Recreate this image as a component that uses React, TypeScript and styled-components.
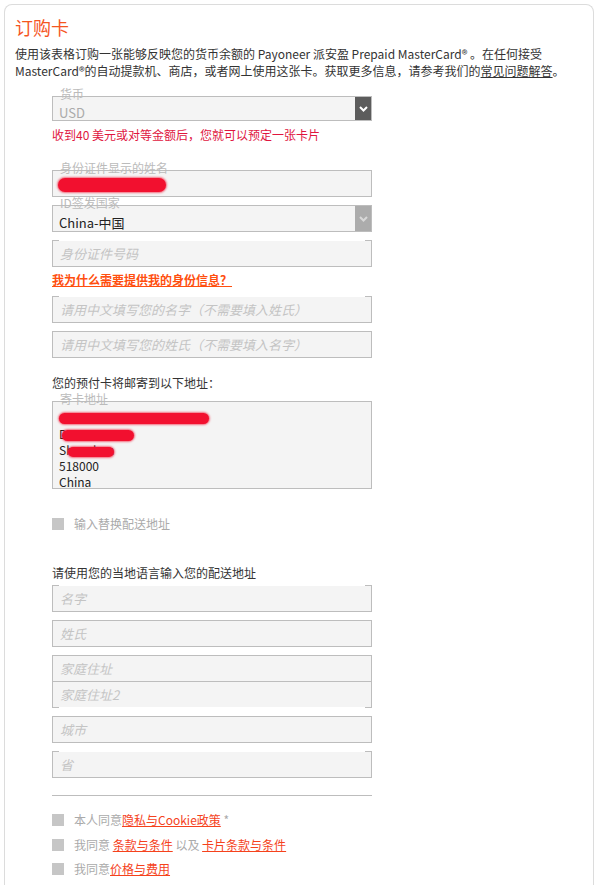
import React from 'react';
import styled, { createGlobalStyle, css } from 'styled-components';

const GlobalStyle = createGlobalStyle`
  html, body {
    margin: 0;
    padding: 0;
    background: #fff;
  }
  body {
    font-family: "Noto Sans CJK SC", "Open Sans", sans-serif;
    font-size: 12px;
    color: #333;
  }
`;

const Card = styled.div`
  margin: 4px 5px 0 4px;
  border: 1px solid #dcdcdc;
  border-bottom: none;
  border-radius: 8px 8px 0 0;
  padding: 10px 10px 0 10px;
  min-height: 881px;
  box-sizing: border-box;
`;

const Title = styled.h1`
  margin: 0;
  font-size: 18px;
  line-height: 24px;
  font-weight: normal;
  color: #f5561f;
`;

const Intro = styled.p`
  margin: 6px 0 0;
  font-size: 12px;
  line-height: 17px;
  color: #333;
  white-space: nowrap;
`;

const FaqLink = styled.a`
  color: #333;
  text-decoration: underline;
`;

const Form = styled.div`
  margin-left: 37px;
  width: 320px;
  display: flex;
  flex-direction: column;
`;

const Field = styled.div<{ $mt: number; $h?: number; $gapTop?: boolean; $gapBottom?: boolean }>`
  position: relative;
  margin-top: ${({ $mt }) => $mt}px;
  height: ${({ $h }) => $h ?? 27}px;
  box-sizing: border-box;
  border: 1px solid #bdbdbd;
  background: #f4f4f4;
  display: flex;
  align-items: center;
  ${({ $gapTop }) =>
    $gapTop &&
    css`
      &::before {
        content: '';
        position: absolute;
        top: -1px;
        left: 6px;
        right: 6px;
        height: 1px;
        background: #fff;
      }
    `}
  ${({ $gapBottom }) =>
    $gapBottom &&
    css`
      &::after {
        content: '';
        position: absolute;
        bottom: -1px;
        left: 6px;
        right: 6px;
        height: 1px;
        background: #fff;
      }
    `}
`;

const Legend = styled.span`
  position: absolute;
  top: -9px;
  left: 4px;
  padding: 0 3px;
  font-size: 12px;
  line-height: 12px;
  color: #bbb;
  background: linear-gradient(#fff 70%, transparent 70%);
`;

const Value = styled.span<{ $muted?: boolean }>`
  padding-left: 6px;
  padding-top: 7px;
  font-size: 13px;
  line-height: 15px;
  color: ${({ $muted }) => ($muted ? '#aaa' : '#222')};
  flex: 1;
`;

const Placeholder = styled.span`
  padding-left: 7px;
  font-size: 13px;
  font-style: italic;
  color: #c4c4c4;
`;

const Arrow = styled.div<{ $dark?: boolean }>`
  align-self: stretch;
  width: 16px;
  background: ${({ $dark }) => ($dark ? '#5c5c5c' : '#acacac')};
  display: flex;
  align-items: center;
  justify-content: center;
  color: ${({ $dark }) => ($dark ? '#fff' : '#d8d8d8')};
`;

const Note = styled.div`
  margin-top: 5px;
  font-size: 12px;
  line-height: 17px;
  color: #e0163f;
`;

const IdLink = styled.a`
  margin-top: 4px;
  align-self: flex-start;
  font-size: 12px;
  line-height: 18px;
  font-weight: bold;
  color: #ff4f0f;
  text-decoration: underline;
`;

const Heading = styled.div<{ $mt: number }>`
  margin-top: ${({ $mt }) => $mt}px;
  font-size: 12px;
  line-height: 18px;
  color: #333;
`;

const AddressBox = styled(Field)`
  display: block;
  padding: 8px 0 0 6px;
`;

const AddressLine = styled.div`
  position: relative;
  font-size: 12px;
  line-height: 16px;
  height: 16px;
  color: #222;
`;

const Redact = styled.span<{ $left: number; $top: number; $w: number; $h?: number }>`
  position: absolute;
  left: ${({ $left }) => $left}px;
  top: ${({ $top }) => $top}px;
  width: ${({ $w }) => $w}px;
  height: ${({ $h }) => $h ?? 12}px;
  border-radius: 8px;
  background: #f2102f;
  box-shadow: 0 0 2px 1px rgba(242, 16, 47, 0.6);
`;

const CheckRow = styled.label<{ $mt: number }>`
  margin-top: ${({ $mt }) => $mt}px;
  display: flex;
  align-items: center;
  gap: 10px;
  font-size: 12px;
  line-height: 16px;
  color: #aaa;
`;

const Box = styled.span`
  width: 12px;
  height: 12px;
  background: #c6c6c6;
  flex-shrink: 0;
`;

const TermsLink = styled.a`
  color: #f5421c;
  text-decoration: underline;
`;

const Divider = styled.hr`
  margin: 17px 0 0;
  border: none;
  border-top: 1px solid #bdbdbd;
  height: 0;
  width: 320px;
`;

const Chevron = () => (
  <svg width="9" height="6" viewBox="0 0 9 6" fill="none">
    <path d="M1 1l3.5 3.5L8 1" stroke="currentColor" strokeWidth="2" />
  </svg>
);

export default function App() {
  return (
    <>
      <GlobalStyle />
      <Card>
        <Title>订购卡</Title>
        <Intro>
          使用该表格订购一张能够反映您的货币余额的 Payoneer 派安盈 Prepaid MasterCard® 。在任何接受
          <br />
          MasterCard®的自动提款机、商店，或者网上使用这张卡。获取更多信息，请参考我们的
          <FaqLink>常见问题解答</FaqLink>。
        </Intro>
        <Form>
          <Field $mt={17} $h={25}>
            <Legend>货币</Legend>
            <Value $muted>USD</Value>
            <Arrow $dark>
              <Chevron />
            </Arrow>
          </Field>
          <Note>收到40 美元或对等金额后，您就可以预定一张卡片</Note>

          <Field $mt={27}>
            <Legend>身份证件显示的姓名</Legend>
            <Redact $left={5} $top={7} $w={108} $h={14} />
          </Field>
          <Field $mt={8}>
            <Legend>ID签发国家</Legend>
            <Value>China-中国</Value>
            <Arrow>
              <Chevron />
            </Arrow>
          </Field>
          <Field $mt={8} $gapTop>
            <Placeholder>身份证件号码</Placeholder>
          </Field>
          <IdLink>我为什么需要提供我的身份信息？</IdLink>
          <Field $mt={7} $gapTop>
            <Placeholder>请用中文填写您的名字（不需要填入姓氏）</Placeholder>
          </Field>
          <Field $mt={8}>
            <Placeholder>请用中文填写您的姓氏（不需要填入名字）</Placeholder>
          </Field>

          <Heading $mt={16}>您的预付卡将邮寄到以下地址：</Heading>
          <AddressBox $mt={9} $h={88}>
            <Legend>寄卡地址</Legend>
            <AddressLine>
              <Redact $left={0} $top={3} $w={150} $h={11} />
            </AddressLine>
            <AddressLine>
              D<Redact $left={3} $top={4} $w={72} $h={11} />
            </AddressLine>
            <AddressLine>
              Shenzhen
              <Redact $left={9} $top={5} $w={46} $h={10} />
            </AddressLine>
            <AddressLine>518000</AddressLine>
            <AddressLine>China</AddressLine>
          </AddressBox>

          <CheckRow $mt={27}>
            <Box />
            输入替换配送地址
          </CheckRow>

          <Heading $mt={32}>请使用您的当地语言输入您的配送地址</Heading>
          <Field $mt={3} $gapTop>
            <Placeholder>名字</Placeholder>
          </Field>
          <Field $mt={8}>
            <Placeholder>姓氏</Placeholder>
          </Field>
          <Field $mt={8}>
            <Placeholder>家庭住址</Placeholder>
          </Field>
          <Field $mt={-1} $gapBottom>
            <Placeholder>家庭住址2</Placeholder>
          </Field>
          <Field $mt={8}>
            <Placeholder>城市</Placeholder>
          </Field>
          <Field $mt={8} $gapTop>
            <Placeholder>省</Placeholder>
          </Field>

          <Divider />

          <CheckRow $mt={16}>
            <Box />
            <span>
              本人同意<TermsLink>隐私与Cookie政策</TermsLink> *
            </span>
          </CheckRow>
          <CheckRow $mt={9}>
            <Box />
            <span>
              我同意 <TermsLink>条款与条件</TermsLink> 以及 <TermsLink>卡片条款与条件</TermsLink>
            </span>
          </CheckRow>
          <CheckRow $mt={8}>
            <Box />
            <span>
              我同意<TermsLink>价格与费用</TermsLink>
            </span>
          </CheckRow>
        </Form>
      </Card>
    </>
  );
}
